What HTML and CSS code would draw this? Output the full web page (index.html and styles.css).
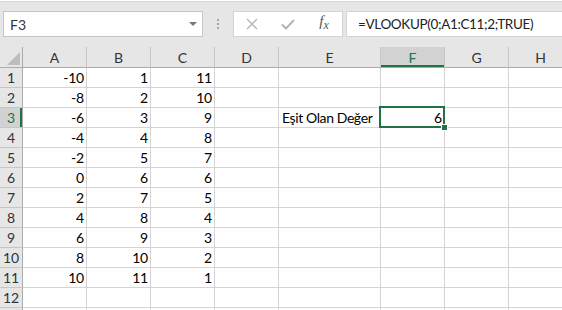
FILE: index.html
```html
<!DOCTYPE html>
<html>
<head>
<meta charset="utf-8">
<link rel="stylesheet" href="styles.css">
</head>
<body>
<div class="app">
  <div class="toolbar">
    <div class="namebox">
      <span class="nb-text">F3</span>
      <span class="nb-arrow"></span>
    </div>
    <div class="dots"><i></i><i></i><i></i></div>
    <div class="buttons">
      <span class="btn"><svg width="12" height="12" viewBox="0 0 12 12"><path d="M1 1 L11 11 M11 1 L1 11" stroke="#b5b5b5" stroke-width="1.4" fill="none"/></svg></span>
      <span class="btn"><svg width="14" height="11" viewBox="0 0 14 11"><path d="M1 5.5 L5 9.5 L13 1" stroke="#b5b5b5" stroke-width="2" fill="none"/></svg></span>
      <span class="btn fx"><i class="f">f</i><i class="x">x</i></span>
    </div>
    <div class="formula">=VLOOKUP(0;A1:C11;2;TRUE)</div>
  </div>
  <div class="sheet">
    <div class="h corner"><span class="tri"></span></div>
    <div class="h col">A</div><div class="h col">B</div><div class="h col">C</div><div class="h col">D</div><div class="h col">E</div><div class="h col selcol">F</div><div class="h col">G</div><div class="h col">H</div>

    <div class="h rh">1</div><div class="c">-10</div><div class="c">1</div><div class="c">11</div><div class="c"></div><div class="c"></div><div class="c"></div><div class="c"></div><div class="c"></div>
    <div class="h rh">2</div><div class="c">-8</div><div class="c">2</div><div class="c">10</div><div class="c"></div><div class="c"></div><div class="c"></div><div class="c"></div><div class="c"></div>
    <div class="h rh selrow">3</div><div class="c">-6</div><div class="c">3</div><div class="c">9</div><div class="c"></div><div class="c t">Eşit Olan Değer</div><div class="c active">6<span class="sel"><span class="handle"></span></span></div><div class="c"></div><div class="c"></div>
    <div class="h rh">4</div><div class="c">-4</div><div class="c">4</div><div class="c">8</div><div class="c"></div><div class="c"></div><div class="c"></div><div class="c"></div><div class="c"></div>
    <div class="h rh">5</div><div class="c">-2</div><div class="c">5</div><div class="c">7</div><div class="c"></div><div class="c"></div><div class="c"></div><div class="c"></div><div class="c"></div>
    <div class="h rh">6</div><div class="c">0</div><div class="c">6</div><div class="c">6</div><div class="c"></div><div class="c"></div><div class="c"></div><div class="c"></div><div class="c"></div>
    <div class="h rh">7</div><div class="c">2</div><div class="c">7</div><div class="c">5</div><div class="c"></div><div class="c"></div><div class="c"></div><div class="c"></div><div class="c"></div>
    <div class="h rh">8</div><div class="c">4</div><div class="c">8</div><div class="c">4</div><div class="c"></div><div class="c"></div><div class="c"></div><div class="c"></div><div class="c"></div>
    <div class="h rh">9</div><div class="c">6</div><div class="c">9</div><div class="c">3</div><div class="c"></div><div class="c"></div><div class="c"></div><div class="c"></div><div class="c"></div>
    <div class="h rh">10</div><div class="c">8</div><div class="c">10</div><div class="c">2</div><div class="c"></div><div class="c"></div><div class="c"></div><div class="c"></div><div class="c"></div>
    <div class="h rh">11</div><div class="c">10</div><div class="c">11</div><div class="c">1</div><div class="c"></div><div class="c"></div><div class="c"></div><div class="c"></div><div class="c"></div>
    <div class="h rh">12</div><div class="c"></div><div class="c"></div><div class="c"></div><div class="c"></div><div class="c"></div><div class="c"></div><div class="c"></div><div class="c"></div>
    <div class="h rh"></div><div class="c"></div><div class="c"></div><div class="c"></div><div class="c"></div><div class="c"></div><div class="c"></div><div class="c"></div><div class="c"></div>
  </div>
</div>
</body>
</html>
```

FILE: styles.css
```css
html, body {
  margin: 0;
  padding: 0;
  background: #ffffff;
}
.app {
  width: 562px;
  height: 310px;
  overflow: hidden;
  font-family: Lato, "Liberation Sans", sans-serif;
}
.toolbar {
  height: 46px;
  box-sizing: border-box;
  background: #e6e6e6;
  border-top: 1px solid #d6d6d6;
  margin-top: 1px;
  padding: 9px 0 0 3px;
  display: flex;
  align-items: flex-start;
  width: 700px;
}
.namebox {
  width: 200px;
  height: 26px;
  box-sizing: border-box;
  background: #fff;
  border: 1px solid #c6c6c6;
  display: flex;
  align-items: center;
  justify-content: space-between;
  padding: 0 5px 0 6px;
}
.nb-text {
  font-size: 14px;
  color: #333;
}
.nb-arrow {
  width: 0;
  height: 0;
  border-left: 4px solid transparent;
  border-right: 4px solid transparent;
  border-top: 4px solid #777;
}
.dots {
  margin: 8px 0 0 14px;
  width: 2px;
  display: flex;
  flex-direction: column;
  gap: 2px;
}
.dots i {
  display: block;
  width: 2px;
  height: 2px;
  background: #a6a6a6;
}
.buttons {
  margin-left: 14px;
  width: 110px;
  height: 26px;
  box-sizing: border-box;
  background: #fff;
  border: 1px solid #d4d4d4;
  display: flex;
}
.btn {
  width: 36px;
  height: 24px;
  display: flex;
  align-items: center;
  justify-content: center;
}
.fx {
  font-family: "Liberation Serif", serif;
  color: #555;
  font-size: 15px;
  align-items: flex-start;
  padding-top: 1px;
  box-sizing: border-box;
}
.fx .x {
  font-size: 12px;
  margin-top: 5px;
}
.formula {
  margin-left: 3px;
  flex: 1;
  height: 26px;
  box-sizing: border-box;
  background: #fff;
  border: 1px solid #d4d4d4;
  padding-left: 11px;
  font-size: 13.5px;
  letter-spacing: -0.35px;
  line-height: 24px;
  color: #222;
}
.sheet {
  display: grid;
  grid-template-columns: 23px 64px 64px 64px 64px 102px 64px 64px 64px;
  grid-template-rows: 21px repeat(13, 20px);
  width: 572px;
  font-size: 14px;
}
.sheet > div {
  box-sizing: border-box;
  border-right: 1px solid #d4d4d4;
  border-bottom: 1px solid #d4d4d4;
  line-height: 19px;
  white-space: nowrap;
}
.sheet > .h {
  background: #e6e6e6;
  color: #333;
  text-align: center;
  border-right-color: #c6c6c6;
  border-bottom-color: #c6c6c6;
  font-size: 14px;
}
.sheet > .col {
  border-bottom-color: #ababab;
  line-height: 21px;
}
.sheet > .rh {
  border-right-color: #ababab;
  line-height: 20px;
}
.corner {
  position: relative;
  border-bottom-color: #ababab !important;
  border-right-color: #ababab !important;
}
.tri {
  position: absolute;
  right: 2px;
  bottom: 2px;
  width: 0;
  height: 0;
  border-left: 13px solid transparent;
  border-bottom: 13px solid #bdbdbd;
}
.sheet > .selcol {
  background: #d2d2d2;
  color: #217346;
  box-shadow: inset 0 -2px 0 #217346;
}
.sheet > .selrow {
  background: #d2d2d2;
  color: #217346;
  box-shadow: inset -2px 0 0 #217346;
}
.c {
  text-align: right;
  padding-right: 2px;
  color: #000;
  letter-spacing: -0.2px;
}
.c.t {
  text-align: left;
  padding-left: 3px;
  letter-spacing: -0.4px;
}
.active {
  position: relative;
}
.sel {
  position: absolute;
  left: -2px;
  top: -2px;
  right: -1px;
  bottom: -1px;
  border: 2px solid #217346;
}
.handle {
  position: absolute;
  right: -4px;
  bottom: -4px;
  width: 5px;
  height: 5px;
  background: #217346;
  box-shadow: 0 0 0 1px #fff;
}
```
